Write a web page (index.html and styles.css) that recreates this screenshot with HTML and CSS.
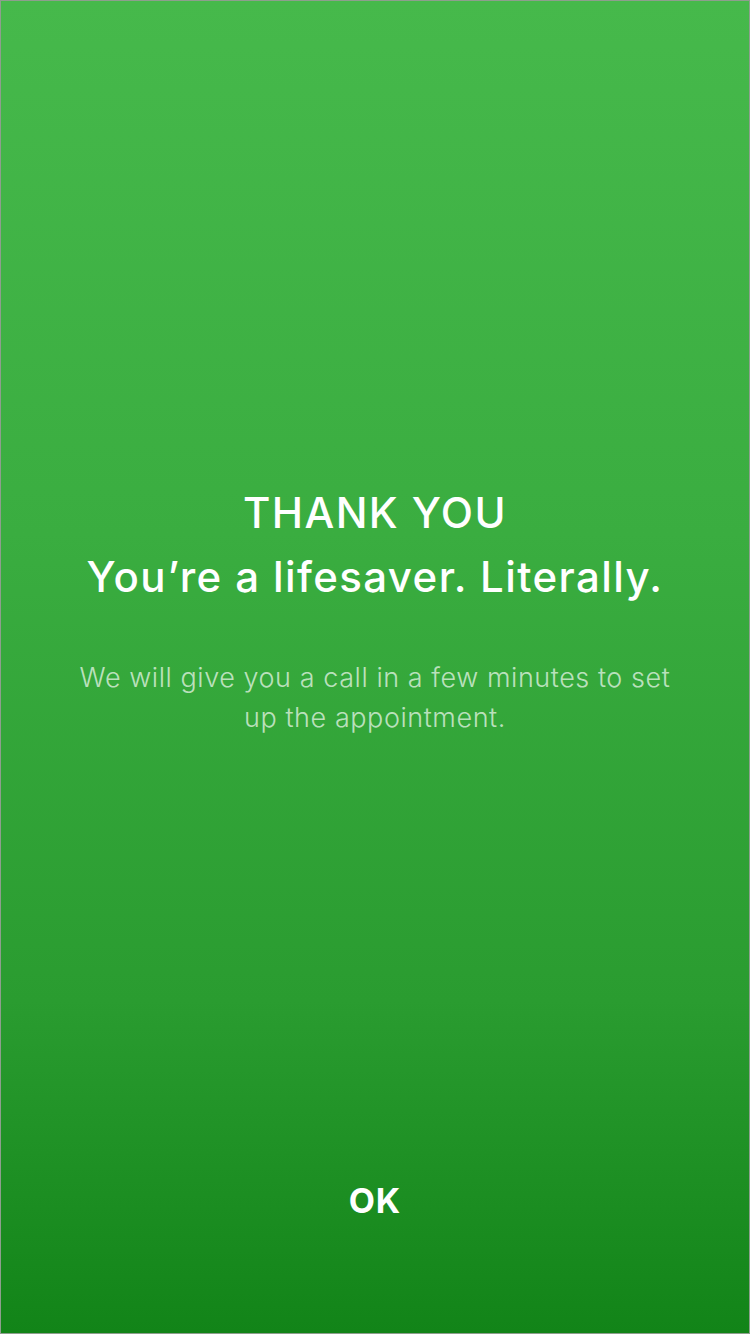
FILE: index.html
```html
<!DOCTYPE html>
<html lang="en">
<head>
<meta charset="utf-8">
<title>Thank you</title>
<link rel="stylesheet" href="styles.css">
</head>
<body>
<main class="screen">
  <section class="message">
    <h1 class="title">THANK YOU<br>You’re a lifesaver. Literally.</h1>
    <p class="note">We will give you a call in a few minutes to set up the appointment.</p>
  </section>
  <button class="ok" type="button">OK</button>
</main>
</body>
</html>
```

FILE: styles.css
```css
html, body {
  margin: 0;
  padding: 0;
}
body {
  width: 750px;
  height: 1334px;
  font-family: Inter, Roboto, "Liberation Sans", sans-serif;
}
.screen {
  box-sizing: border-box;
  width: 750px;
  height: 1334px;
  border: 1px solid #8e9e8e;
  background: linear-gradient(180deg, #46b94b 0%, #3aad40 40%, #2a9c30 75%, #128418 100%);
  display: flex;
  flex-direction: column;
  align-items: center;
  padding: 480px 0 112px;
}
.message {
  display: flex;
  flex-direction: column;
  align-items: center;
  text-align: center;
}
.title {
  margin: 0;
  font-size: 42px;
  line-height: 64px;
  font-weight: 500;
  letter-spacing: 1.4px;
  color: #ffffff;
}
.note {
  margin: 49px 0 0;
  max-width: 610px;
  font-size: 27px;
  line-height: 40px;
  font-weight: 300;
  letter-spacing: 0.55px;
  color: rgba(255, 255, 255, 0.68);
}
.ok {
  margin-top: auto;
  background: none;
  border: 0;
  padding: 0;
  font-family: Inter, Roboto, "Liberation Sans", sans-serif;
  font-size: 34px;
  line-height: 40px;
  font-weight: 700;
  letter-spacing: 1px;
  color: #ffffff;
}
```
